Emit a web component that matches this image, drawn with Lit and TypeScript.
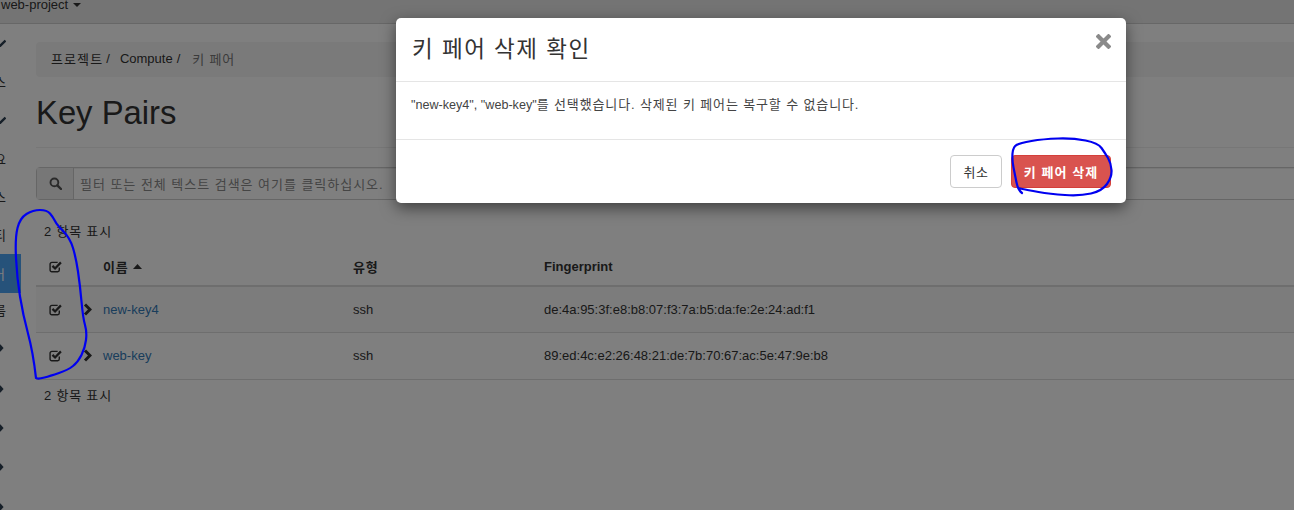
import { LitElement, html, css, svg } from "lit";
import { customElement } from "lit/decorators.js";

type Pt = [number, number];

const smooth = (p: Pt[]) => {
  let d = `M${p[0][0]} ${p[0][1]}`;
  for (let i = 1; i < p.length - 1; i++) {
    const mx = (p[i][0] + p[i + 1][0]) / 2;
    const my = (p[i][1] + p[i + 1][1]) / 2;
    d += ` Q${p[i][0]} ${p[i][1]} ${mx} ${my}`;
  }
  const l = p[p.length - 1];
  return d + ` L${l[0]} ${l[1]}`;
};

const leftScribble: Pt[] = [
  [36, 378], [33, 352], [23, 315], [17, 278], [15, 238], [20, 218], [33, 210], [47, 210],
  [53, 217], [57, 225], [70, 238], [76, 258], [80, 285], [83, 318], [87, 332], [85, 348],
  [78, 362], [68, 370], [50, 376], [39, 379], [36, 378],
];
const rightScribble: Pt[] = [
  [1022, 193], [1018, 190], [1015, 175], [1012, 160], [1013, 147], [1020, 143], [1043, 139],
  [1073, 138], [1098, 143], [1105, 153], [1111, 163], [1112, 177], [1102, 191], [1080, 196],
  [1050, 194], [1027, 190], [1018, 188],
];

type Nav = { h: number; kind: "down" | "right" | "text"; label?: string; active?: boolean };
const nav: Nav[] = [
  { h: 38.3, kind: "down" },
  { h: 38.3, kind: "text", label: "스" },
  { h: 38.3, kind: "down" },
  { h: 38.3, kind: "text", label: "요" },
  { h: 38.3, kind: "text", label: "스" },
  { h: 38.5, kind: "text", label: "티" },
  { h: 39, kind: "text", label: "어", active: true },
  { h: 34, kind: "text", label: "름" },
  { h: 42, kind: "right" },
  { h: 39.3, kind: "right" },
  { h: 39.3, kind: "right" },
  { h: 39.3, kind: "right" },
  { h: 39.3, kind: "right" },
];

const rows = [
  { name: "new-key4", type: "ssh", fp: "de:4a:95:3f:e8:b8:07:f3:7a:b5:da:fe:2e:24:ad:f1", h: 46 },
  { name: "web-key", type: "ssh", fp: "89:ed:4c:e2:26:48:21:de:7b:70:67:ac:5e:47:9e:b8", h: 47 },
];

const checkIcon = html`<svg class="check" width="13" height="13" viewBox="0 0 12 12">
  <path d="M9.5 7v2.2A1.6 1.6 0 0 1 8 10.8H2.6A1.6 1.6 0 0 1 1 9.2V3.8A1.6 1.6 0 0 1 2.6 2.2H8" fill="none" stroke="#333" stroke-width="1.3"/>
  <path d="M3.2 5.4 5.6 7.8 11 2.2" fill="none" stroke="#333" stroke-width="2.1"/>
</svg>`;

@customElement("app-root")
export class AppRoot extends LitElement {
  static styles = css`
    :host {
      display: block;
      width: 1294px;
      height: 510px;
      font-family: "Liberation Sans", "Noto Sans CJK KR", sans-serif;
      font-size: 13px;
      color: #333;
    }
    .page { position: relative; width: 1294px; height: 510px; overflow: hidden; background: #fff; }
    .ko { letter-spacing: 0.8px; }
    .topbar {
      height: 23px; background: #e8e8e8; border-bottom: 1px solid #cfcfcf;
      display: flex; gap: 5px; align-items: flex-start; padding-left: 1px; line-height: 10px;
    }
    .caret { margin-top: 3px; }
    .shell { display: flex; height: 486px; }
    .side { width: 21px; flex: none; overflow: hidden; }
    .nav {
      display: flex; align-items: center; justify-content: flex-end;
      padding-right: 15px; color: #333; white-space: nowrap;
    }
    .nav.active { background: #4da4f4; color: #fff; padding-right: 0; justify-content: flex-start; }
    .nav.active span { margin-left: -7px; }
    .nav svg { flex: none; }
    .main { flex: none; width: 1270px; margin-left: 15px; padding-top: 18px; }
    .crumb {
      height: 35px; box-sizing: border-box; padding: 0 0 2px 15px; background: #f5f5f5; border-radius: 4px;
      display: flex; align-items: center; white-space: pre;
    }
    .crumb .sep { color: #333; padding: 0 10px 0 3px; }
    .crumb .latin + .sep { padding-left: 4px; }
    .crumb .first-ko { letter-spacing: 1.1px; }
    .crumb .cur { color: #777; padding-left: 2px; }
    .head { height: 70px; border-bottom: 1px solid #eee; display: flex; align-items: center; }
    h1 { margin: 0; font-size: 32.8px; font-weight: 400; line-height: 36px; color: #333; padding-top: 2px; }
    .search {
      margin-top: 19px; height: 33px; box-sizing: border-box; border: 1px solid #ccc; border-radius: 4px;
      display: flex; align-items: stretch; box-shadow: inset 0 1px 1px rgba(0,0,0,.075);
    }
    .addon {
      width: 36px; flex: none; background: #eee; border-right: 1px solid #ccc;
      display: flex; align-items: center; justify-content: center;
    }
    .ph { padding-left: 6px; color: #8a8a8a; display: flex; align-items: center; letter-spacing: 0.97px; }
    .count { padding-left: 8px; height: 18px; line-height: 18px; letter-spacing: 0.8px; }
    .count.top { margin-top: 23px; }
    .count.bottom { margin-top: 7px; }
    .row {
      display: grid; grid-template-columns: 67px 250px 191px 1fr; align-items: center;
      border-bottom: 1px solid #ddd; box-sizing: border-box;
    }
    .row.th { margin-top: 9px; height: 37px; border-bottom: 2px solid #ddd; font-weight: 700; padding-bottom: 3px; }
    .row.odd { background: #f9f9f9; }
    .row.even { padding-bottom: 1px; }
    .first { display: flex; align-items: center; padding-left: 13px; gap: 21px; }
    .check { flex: none; }
    a { color: #337ab7; text-decoration: none; }
    .sort { margin-left: 4px; vertical-align: 3px; }
    .backdrop { position: absolute; inset: 0; background: rgba(0,0,0,.5); }
    .modal {
      position: absolute; left: 396px; top: 18px; width: 730px; height: 185px;
      background: #fff; border-radius: 5px; box-sizing: border-box;
      box-shadow: 0 5px 15px rgba(0,0,0,.5); display: flex; flex-direction: column;
    }
    .m-head {
      height: 64px; box-sizing: border-box; border-bottom: 1px solid #e5e5e5; padding: 0 15px 0 16px;
      display: flex; align-items: center; justify-content: space-between;
    }
    .m-title { font-size: 22.5px; font-weight: 400; margin: 0 0 5px; color: #333; letter-spacing: 1.5px; }
    .close { align-self: flex-start; margin-top: 16px; }
    .m-body { height: 58px; box-sizing: border-box; border-bottom: 1px solid #e5e5e5; padding: 14px 15px 0; line-height: 18px; font-size: 12.6px; color: #444; }
    .m-body .ko { font-size: 13px; letter-spacing: 0.87px; }
    .m-foot { flex: 1; display: flex; justify-content: flex-end; align-items: flex-start; gap: 9px; padding: 15px 15px 0 0; }
    button { font: inherit; height: 33px; box-sizing: border-box; border-radius: 4px; padding: 0; }
    .cancel { width: 52px; background: #fff; border: 1px solid #ccc; color: #333; letter-spacing: 0.5px; }
    .danger { width: 100px; background: #d9534f; border: 1px solid #d43f3a; color: #fff; font-weight: 700; letter-spacing: 1.1px; }
    .ink { position: absolute; inset: 0; pointer-events: none; }
  `;

  navIcon(n: Nav) {
    if (n.kind === "down")
      return html`<svg width="6" height="8" viewBox="0 0 6 8"><path d="M-3 4.5 0 7 5.5 1.5" fill="none" stroke="#2c3e50" stroke-width="2.4"/></svg>`;
    if (n.kind === "right")
      return html`<svg width="6" height="10" viewBox="0 0 6 10"><path d="M-2 1.5 0.5 1.5 3.6 5 0.5 8.5 -2 8.5z" fill="#2c3e50"/></svg>`;
    return html`<span>${n.label}</span>`;
  }

  render() {
    return html`
      <div class="page">
        <div class="topbar">
          <span>web-project</span>
          <svg class="caret" width="8" height="4" viewBox="0 0 8 4"><path d="M0 0h8L4 4z" fill="#333"/></svg>
        </div>
        <div class="shell">
          <nav class="side">
            ${nav.map(
              (n) => html`<div class="nav ${n.active ? "active" : ""}" style="height:${n.h}px">${this.navIcon(n)}</div>`
            )}
          </nav>
          <main class="main">
            <div class="crumb">
              <span class="first-ko">프로젝트</span><span class="sep">/</span><span class="latin">Compute</span><span class="sep">/</span><span class="cur ko">키 페어</span>
            </div>
            <div class="head"><h1>Key Pairs</h1></div>
            <div class="search">
              <div class="addon">
                <svg width="13" height="13" viewBox="0 0 13 13"><circle cx="5.4" cy="5.4" r="3.9" fill="none" stroke="#555" stroke-width="1.9"/><path d="M8.3 8.3 12 12" stroke="#555" stroke-width="2.4" stroke-linecap="round"/></svg>
              </div>
              <div class="ph">필터 또는 전체 텍스트 검색은 여기를 클릭하십시오.</div>
            </div>
            <div class="count top">2 항목 표시</div>
            <div class="row th">
              <div class="first">${checkIcon}</div>
              <div><span class="ko">이름</span><svg class="sort" width="9" height="5" viewBox="0 0 9 5"><path d="M0 5 4.5 0 9 5z" fill="#333"/></svg></div>
              <div class="ko">유형</div>
              <div>Fingerprint</div>
            </div>
            ${rows.map(
              (r, i) => html`<div class="row ${i === 0 ? "odd" : "even"}" style="height:${r.h}px">
                <div class="first">
                  ${checkIcon}
                  <svg width="9" height="13" viewBox="0 0 9 13"><path d="M2 1.5 7 6.5 2 11.5" fill="none" stroke="#333" stroke-width="3"/></svg>
                </div>
                <div><a>${r.name}</a></div>
                <div>${r.type}</div>
                <div>${r.fp}</div>
              </div>`
            )}
            <div class="count bottom">2 항목 표시</div>
          </main>
        </div>
        <div class="backdrop"></div>
        <section class="modal">
          <header class="m-head">
            <h3 class="m-title">키 페어 삭제 확인</h3>
            <svg class="close" width="15" height="15" viewBox="0 0 15 15"><path d="M2.5 2.5 12.5 12.5M12.5 2.5 2.5 12.5" stroke="#8a8a8a" stroke-width="4.2" stroke-linecap="square"/></svg>
          </header>
          <div class="m-body">"new-key4", "web-key"<span class="ko">를 선택했습니다. 삭제된 키 페어는 복구할 수 없습니다.</span></div>
          <footer class="m-foot">
            <button class="cancel">취소</button>
            <button class="danger">키 페어 삭제</button>
          </footer>
        </section>
        <svg class="ink" width="1294" height="510" viewBox="0 0 1294 510">
          ${[leftScribble, rightScribble].map(
            (p) => svg`<path d="${smooth(p)}" fill="none" stroke="#0000f0" stroke-width="2.2" stroke-linecap="round" stroke-linejoin="round"/>`
          )}
        </svg>
      </div>
    `;
  }
}
